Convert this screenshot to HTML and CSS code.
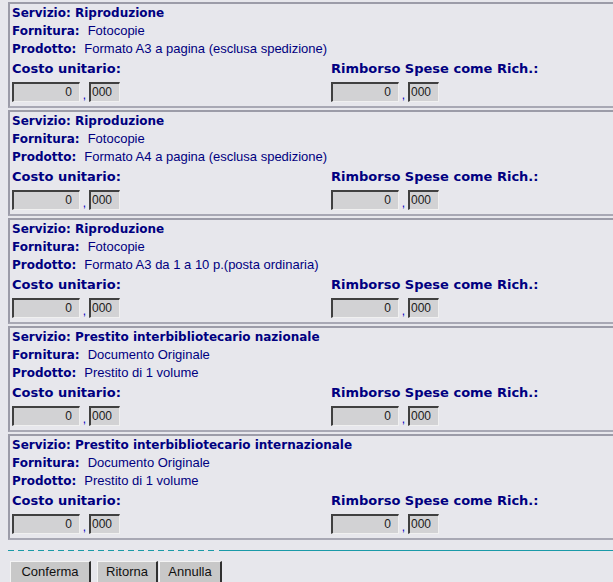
FILE: index.html
```html
<!DOCTYPE html>
<html>
<head>
<meta charset="utf-8">
<link rel="stylesheet" href="styles.css">
</head>
<body>
<div class="page">
  <div class="section">
    <div class="row title">Servizio: Riproduzione</div>
    <div class="row"><span class="lbl">Fornitura</span>:<span class="val">Fotocopie</span></div>
    <div class="row"><span class="lbl">Prodotto</span>:<span class="val">Formato A3 a pagina (esclusa spedizione)</span></div>
    <div class="cols">
      <div class="col"><div class="head">Costo unitario:</div><div class="amt"><span class="in int">0</span><span class="comma">,</span><span class="in dec">000</span></div></div>
      <div class="col"><div class="head">Rimborso Spese come Rich.:</div><div class="amt"><span class="in int">0</span><span class="comma">,</span><span class="in dec">000</span></div></div>
    </div>
  </div>
  <div class="section">
    <div class="row title">Servizio: Riproduzione</div>
    <div class="row"><span class="lbl">Fornitura</span>:<span class="val">Fotocopie</span></div>
    <div class="row"><span class="lbl">Prodotto</span>:<span class="val">Formato A4 a pagina (esclusa spedizione)</span></div>
    <div class="cols">
      <div class="col"><div class="head">Costo unitario:</div><div class="amt"><span class="in int">0</span><span class="comma">,</span><span class="in dec">000</span></div></div>
      <div class="col"><div class="head">Rimborso Spese come Rich.:</div><div class="amt"><span class="in int">0</span><span class="comma">,</span><span class="in dec">000</span></div></div>
    </div>
  </div>
  <div class="section">
    <div class="row title">Servizio: Riproduzione</div>
    <div class="row"><span class="lbl">Fornitura</span>:<span class="val">Fotocopie</span></div>
    <div class="row"><span class="lbl">Prodotto</span>:<span class="val">Formato A3 da 1 a 10 p.(posta ordinaria)</span></div>
    <div class="cols">
      <div class="col"><div class="head">Costo unitario:</div><div class="amt"><span class="in int">0</span><span class="comma">,</span><span class="in dec">000</span></div></div>
      <div class="col"><div class="head">Rimborso Spese come Rich.:</div><div class="amt"><span class="in int">0</span><span class="comma">,</span><span class="in dec">000</span></div></div>
    </div>
  </div>
  <div class="section">
    <div class="row title">Servizio: Prestito interbibliotecario nazionale</div>
    <div class="row"><span class="lbl">Fornitura</span>:<span class="val">Documento Originale</span></div>
    <div class="row"><span class="lbl">Prodotto</span>:<span class="val">Prestito di 1 volume</span></div>
    <div class="cols">
      <div class="col"><div class="head">Costo unitario:</div><div class="amt"><span class="in int">0</span><span class="comma">,</span><span class="in dec">000</span></div></div>
      <div class="col"><div class="head">Rimborso Spese come Rich.:</div><div class="amt"><span class="in int">0</span><span class="comma">,</span><span class="in dec">000</span></div></div>
    </div>
  </div>
  <div class="section">
    <div class="row title">Servizio: Prestito interbibliotecario internazionale</div>
    <div class="row"><span class="lbl">Fornitura</span>:<span class="val">Documento Originale</span></div>
    <div class="row"><span class="lbl">Prodotto</span>:<span class="val">Prestito di 1 volume</span></div>
    <div class="cols">
      <div class="col"><div class="head">Costo unitario:</div><div class="amt"><span class="in int">0</span><span class="comma">,</span><span class="in dec">000</span></div></div>
      <div class="col"><div class="head">Rimborso Spese come Rich.:</div><div class="amt"><span class="in int">0</span><span class="comma">,</span><span class="in dec">000</span></div></div>
    </div>
  </div>
  <div class="sep"><div class="dash"></div><div class="solid"></div></div>
  <div class="buttons">
    <span class="btn b1">Conferma</span>
    <span class="btn b2">Ritorna</span>
    <span class="btn b3">Annulla</span>
  </div>
</div>
</body>
</html>
```

FILE: styles.css
```css
html, body {
  margin: 0;
  padding: 0;
  background: #e7e7ec;
}
body {
  font-family: "DejaVu Sans", Verdana, sans-serif;
  color: #000080;
  overflow: hidden;
}
.page {
  padding: 0 0 0 8px;
}
.section {
  margin-top: 2px;
  border: 2px solid #9c9ca8;
  border-right: none;
  border-bottom-color: #a8a8b4;
  padding: 0 0 4px 2px;
  height: 98px;
}
.row {
  height: 18px;
  line-height: 18px;
  font-size: 12px;
  font-weight: bold;
  white-space: nowrap;
}
.lbl { font-weight: bold; }
.val {
  font-family: "Liberation Sans", Arial, sans-serif;
  font-weight: normal;
  font-size: 13px;
  margin-left: 8px;
}
.cols {
  display: grid;
  grid-template-columns: 319px 1fr;
  margin-top: 2px;
}
.head {
  height: 18px;
  line-height: 18px;
  font-size: 13px;
  font-weight: bold;
  white-space: nowrap;
}
.amt {
  display: flex;
  align-items: flex-end;
  margin-top: 4px;
  height: 20px;
}
.in {
  box-sizing: border-box;
  height: 20px;
  background: #d2d2d4;
  border-top: 2px solid #404040;
  border-left: 2px solid #404040;
  border-right: 1px solid #f0f0f0;
  border-bottom: 1px solid #f0f0f0;
  font-family: "Liberation Sans", Arial, sans-serif;
  font-size: 12px;
  color: #202020;
  line-height: 17px;
}
.int {
  width: 68px;
  text-align: right;
  padding-right: 7px;
}
.dec {
  width: 31px;
  padding-left: 1px;
}
.comma {
  width: 9px;
  text-align: center;
  font-family: "Liberation Sans", Arial, sans-serif;
  font-size: 12px;
  color: #0000c0;
  line-height: 14px;
}
.sep {
  display: flex;
  margin-top: 10px;
  height: 1px;
}
.dash {
  width: 206px;
  height: 1px;
  background: repeating-linear-gradient(to right, #1a9aa8 0 6px, transparent 6px 10px);
  margin-right: 5px;
}
.solid {
  flex: 1;
  height: 1px;
  background: #1a9aa8;
}
.buttons {
  display: flex;
  margin-top: 10px;
  padding-left: 2px;
}
.btn {
  box-sizing: border-box;
  height: 22px;
  line-height: 20px;
  background: #c8c8c8;
  border-top: 1px solid #f4f4f4;
  border-left: 1px solid #f4f4f4;
  border-right: 2px solid #303030;
  font-family: "Liberation Sans", Arial, sans-serif;
  font-size: 13px;
  color: #101010;
  text-align: center;
}
.b1 { width: 81px; margin-right: 6px; }
.b2 { width: 61px; margin-right: 1px; }
.b3 { width: 63px; }
```
